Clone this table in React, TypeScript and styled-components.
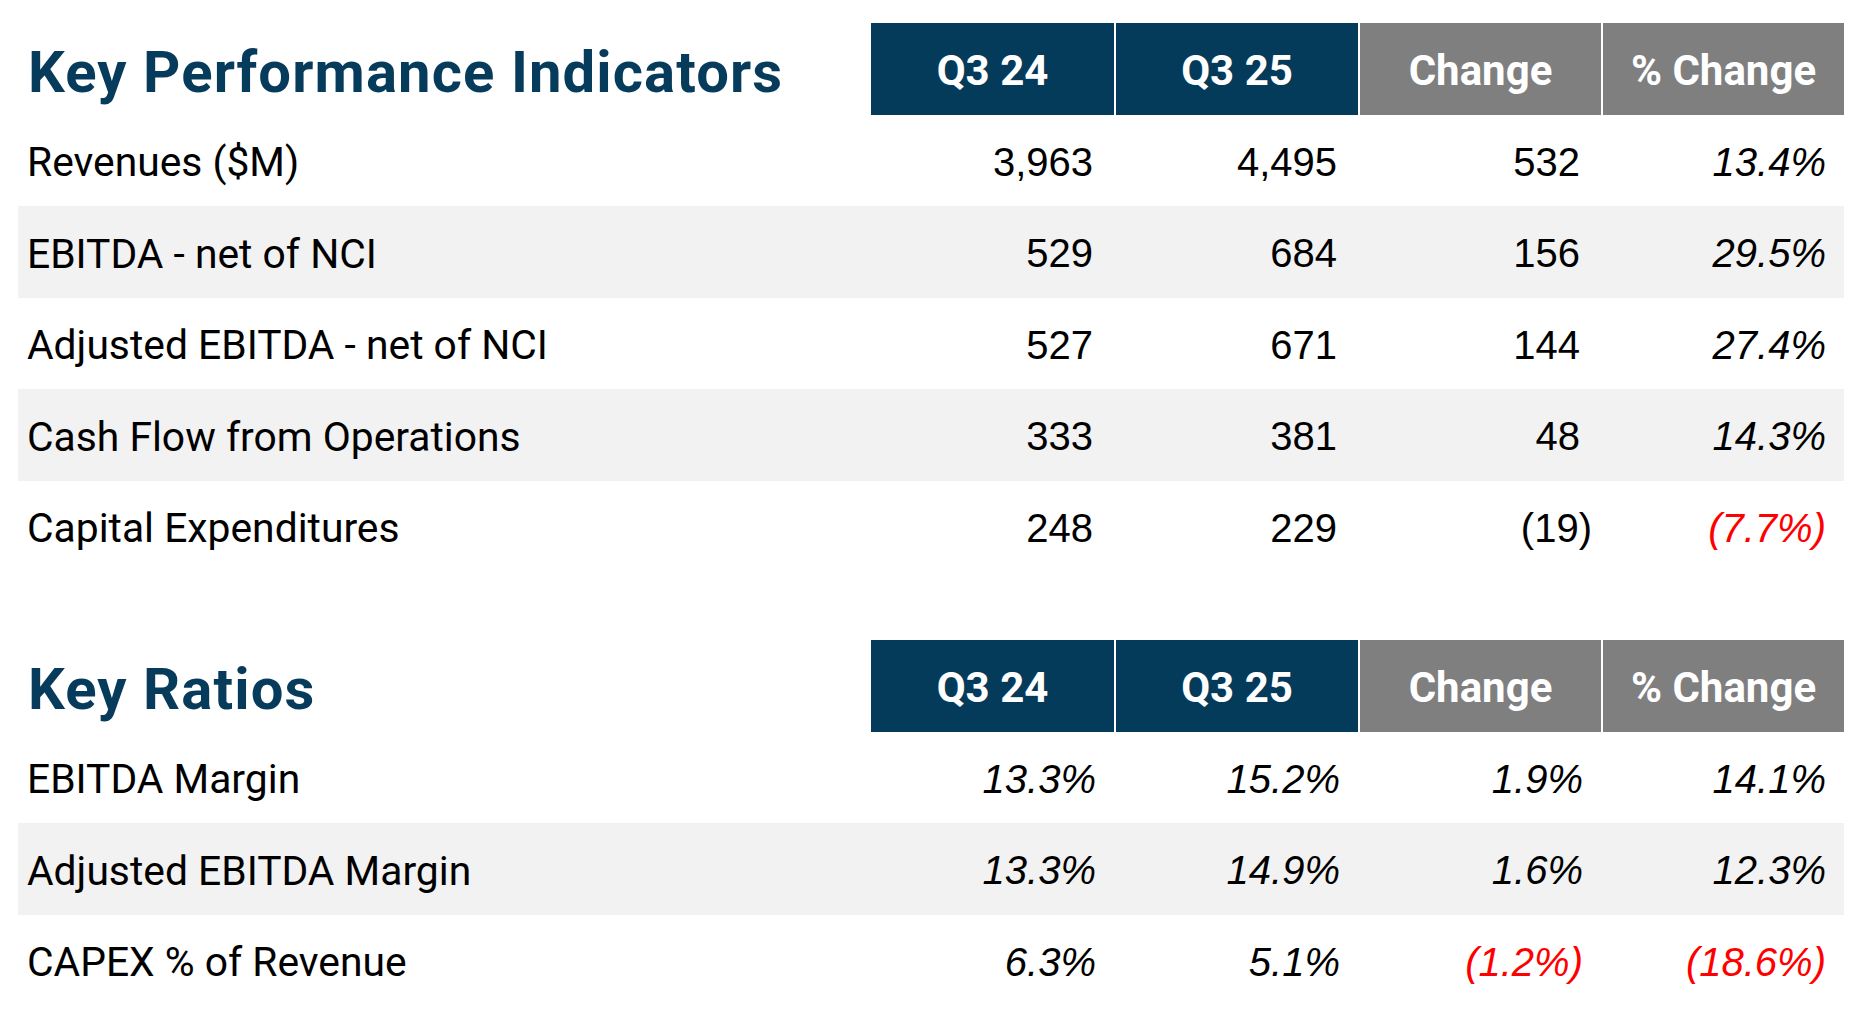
import styled, { createGlobalStyle } from "styled-components";

type Cell = { v: string; italic?: boolean; red?: boolean; hang?: boolean };
type Line = { label: string; cells: Cell[] };

const kpis: Line[] = [
    { label: "Revenues ($M)", cells: [{ v: "3,963" }, { v: "4,495" }, { v: "532" }, { v: "13.4%", italic: true }] },
    { label: "EBITDA - net of NCI", cells: [{ v: "529" }, { v: "684" }, { v: "156" }, { v: "29.5%", italic: true }] },
    { label: "Adjusted EBITDA - net of NCI", cells: [{ v: "527" }, { v: "671" }, { v: "144" }, { v: "27.4%", italic: true }] },
    { label: "Cash Flow from Operations", cells: [{ v: "333" }, { v: "381" }, { v: "48" }, { v: "14.3%", italic: true }] },
    { label: "Capital Expenditures", cells: [{ v: "248" }, { v: "229" }, { v: "(19)", hang: true }, { v: "(7.7%)", italic: true, red: true }] },
];

const ratios: Line[] = [
    { label: "EBITDA Margin", cells: [{ v: "13.3%", italic: true }, { v: "15.2%", italic: true }, { v: "1.9%", italic: true }, { v: "14.1%", italic: true }] },
    { label: "Adjusted EBITDA Margin", cells: [{ v: "13.3%", italic: true }, { v: "14.9%", italic: true }, { v: "1.6%", italic: true }, { v: "12.3%", italic: true }] },
    { label: "CAPEX % of Revenue", cells: [{ v: "6.3%", italic: true }, { v: "5.1%", italic: true }, { v: "(1.2%)", italic: true, red: true }, { v: "(18.6%)", italic: true, red: true }] },
];

const heads = [
    { t: "Q3 24", grey: false },
    { t: "Q3 25", grey: false },
    { t: "Change", grey: true },
    { t: "% Change", grey: true },
];

const Table = ({ title, rows }: { title: string; rows: Line[] }) => (
    <Section>
        <Row>
            <Title>{title}</Title>
            {heads.map((h) => (
                <Head key={h.t} $grey={h.grey}>{h.t}</Head>
            ))}
        </Row>
        {rows.map((r, i) => (
            <Row key={r.label} $striped={i % 2 === 1}>
                <Label>{r.label}</Label>
                {r.cells.map((c, j) => (
                    <Num key={j} $italic={c.italic} $red={c.red}>
                        <Val $hang={c.hang}>{c.v}</Val>
                    </Num>
                ))}
            </Row>
        ))}
    </Section>
);

export default function App() {
    return (
        <>
            <GlobalStyle />
            <Page>
                <Table title="Key Performance Indicators" rows={kpis} />
                <Table title="Key Ratios" rows={ratios} />
            </Page>
        </>
    );
}

const GlobalStyle = createGlobalStyle`
    html, body {
        margin: 0;
        padding: 0;
        background: #ffffff;
    }
    body {
        font-family: Roboto, "Liberation Sans", sans-serif;
        color: #000000;
    }
`;

const Page = styled.div`
    width: 1826px;
    padding: 23px 0 0 18px;
    display: flex;
    flex-direction: column;
    gap: 68px;
`;

const Section = styled.div`
    display: flex;
    flex-direction: column;
`;

const Row = styled.div<{ $striped?: boolean }>`
    display: grid;
    grid-template-columns: 851px 243px 242px 241px 241px;
    column-gap: 2px;
    min-height: 91.5px;
    background: ${(p) => (p.$striped ? "#f2f2f2" : "transparent")};
`;

const Title = styled.h2`
    margin: 0;
    padding: 6px 0 0 10px;
    display: flex;
    align-items: center;
    font-family: Roboto, sans-serif;
    font-weight: 700;
    font-size: 58px;
    letter-spacing: 1.1px;
    color: #073b5b;
`;

const Head = styled.div<{ $grey?: boolean }>`
    display: flex;
    align-items: center;
    justify-content: center;
    padding-top: 3px;
    background: ${(p) => (p.$grey ? "#7f7f7f" : "#053b5a")};
    color: #ffffff;
    font-family: Roboto, sans-serif;
    font-weight: 700;
    font-size: 42px;
`;

const Label = styled.div`
    display: flex;
    align-items: center;
    padding: 4px 0 0 9px;
    font-family: Roboto, sans-serif;
    font-size: 40.8px;
`;

const Num = styled.div<{ $italic?: boolean; $red?: boolean }>`
    display: flex;
    align-items: center;
    justify-content: flex-end;
    padding: 4px ${(p) => (p.$italic ? "18px" : "21px")} 0 0;
    font-family: "Liberation Sans", Arial, sans-serif;
    font-size: 40px;
    font-style: ${(p) => (p.$italic ? "italic" : "normal")};
    color: ${(p) => (p.$red ? "#ff0000" : "#000000")};
`;

const Val = styled.span<{ $hang?: boolean }>`
    margin-right: ${(p) => (p.$hang ? "-0.3em" : "0")};
`;
